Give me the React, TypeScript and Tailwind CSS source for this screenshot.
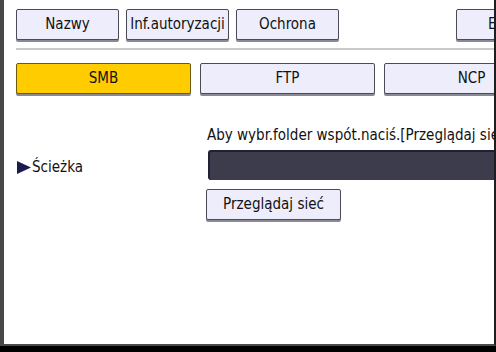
import * as React from 'react';

const base =
  'shrink-0 h-[31px] rounded-[2px] border border-[#4b4b55] bg-[#ededfb] shadow-[0_2px_0_#8a8a96] text-[15px] font-normal text-[#111] flex items-center leading-none';
const btn = base + ' justify-center';

const App: React.FC = () => {
  const font = { fontFamily: '"Liberation Sans Narrow", "DejaVu Sans Condensed", sans-serif' };

  return (
    <div className="w-[496px] h-[352px] bg-black overflow-hidden" style={font}>
      <div className="h-[346px] bg-white border-l-4 border-l-[#474747] border-r-2 border-r-[#1e1e1e] border-b-2 border-b-[#4a4a4a] overflow-hidden">
        {/* tab row */}
        <div className="flex gap-[7px] pl-3 pt-[9px]">
          <button className={`${btn} w-[103px]`}>Nazwy</button>
          <button className={`${btn} w-[103px]`}>Inf.autoryzacji</button>
          <button className={`${btn} w-[103px]`}>Ochrona</button>
          <div className="w-[103px] shrink-0" />
          <button className={`${base} w-[103px] pl-[31px]`}>E</button>
        </div>

        <div className="ml-3 mt-[8px] h-[2px] bg-[#c9c9c9]" />

        {/* protocol row */}
        <div className="flex gap-[9px] pl-3 mt-[13px]">
          <button className={`${btn} w-[175px] bg-[#ffcc00] border-[#6b5a10] shadow-[0_1px_0_#8a7a30]`}>SMB</button>
          <button className={btn + ' w-[175px]'}>FTP</button>
          <button className={btn + ' w-[175px]'}>NCP</button>
        </div>

        {/* path */}
        <div className="flex pl-[13px] mt-[34px]">
          <div className="w-[190px] shrink-0 flex items-center pt-[16px] self-start h-[62px]">
            <svg width="14" height="13" viewBox="0 0 14 13" className="shrink-0">
              <polygon points="0,0 14,6.5 0,13" fill="#1b1b4f" />
            </svg>
            <span className="text-[15px] text-[#111] ml-[1px]">Ścieżka</span>
          </div>
          <div className="flex flex-col min-w-0">
            <div className="text-[15px] text-[#111] whitespace-nowrap leading-none h-[22px]">
              Aby wybr.folder wspót.naciś.[Przeglądaj sieć]
            </div>
            <div className="ml-[1px] w-[300px] h-[30px] rounded-l-[3px] bg-[#3d3c4c] border-t-2 border-l-2 border-[#202036]" />
            <button className={`${btn} w-[135px] h-[30px] -ml-[1px] mt-[9px]`}>Przeglądaj sieć</button>
          </div>
        </div>
      </div>
    </div>
  );
};

export default App;
